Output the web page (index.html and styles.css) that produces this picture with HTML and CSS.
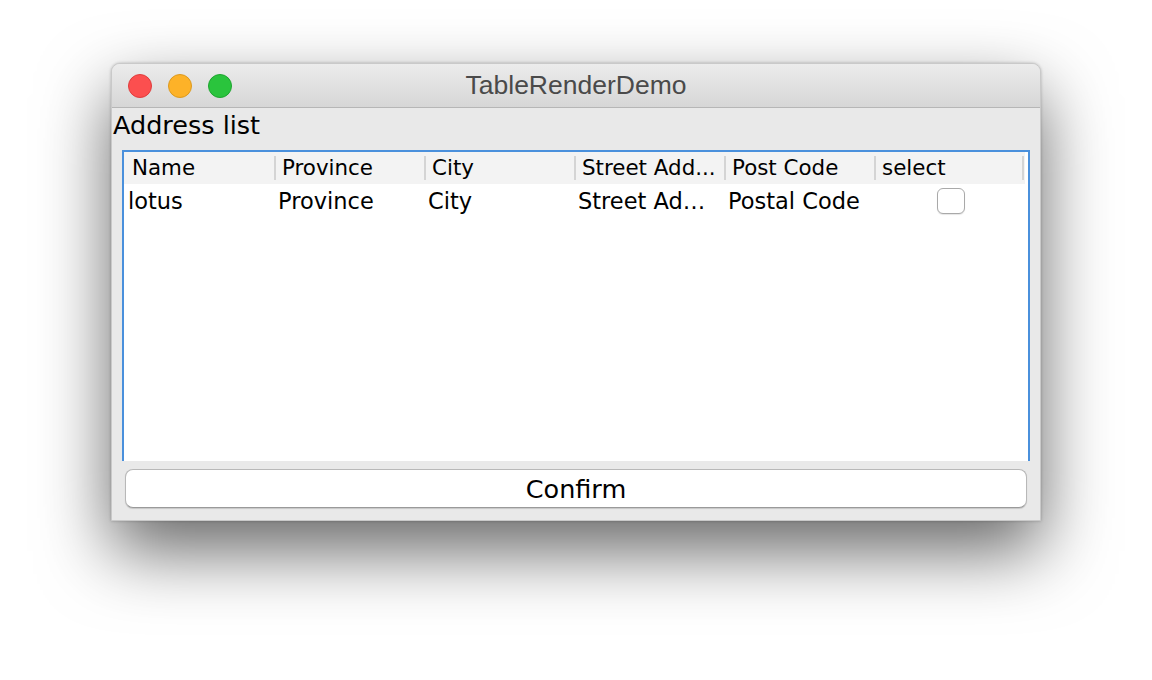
FILE: index.html
```html
<!DOCTYPE html>
<html>
<head>
<meta charset="utf-8">
<link rel="stylesheet" href="styles.css">
</head>
<body>
<div class="window">
  <div class="titlebar">
    <div class="lights">
      <span class="light red"></span>
      <span class="light yellow"></span>
      <span class="light green"></span>
    </div>
    <div class="title">TableRenderDemo</div>
  </div>
  <div class="content">
    <div class="label">Address list</div>
    <div class="pane">
      <div class="table">
        <div class="thead">
          <div class="th">Name</div>
          <div class="th">Province</div>
          <div class="th">City</div>
          <div class="th">Street Add...</div>
          <div class="th">Post Code</div>
          <div class="th">select</div>
        </div>
        <div class="tr">
          <div class="td">lotus</div>
          <div class="td">Province</div>
          <div class="td">City</div>
          <div class="td">Street Ad…</div>
          <div class="td">Postal Code</div>
          <div class="td check"><span class="checkbox"></span></div>
        </div>
      </div>
    </div>
    <div class="actions">
      <button class="button">Confirm</button>
    </div>
  </div>
</div>
</body>
</html>
```
FILE: styles.css
```css
html, body {
  margin: 0;
  padding: 0;
  background: #ffffff;
  width: 1152px;
  height: 680px;
  overflow: hidden;
}
.window {
  margin: 63px 0 0 111px;
  width: 930px;
  height: 458px;
  box-sizing: border-box;
  border: 1px solid #c9c9c9;
  border-radius: 9px 9px 0 0;
  background: #e9e9e9;
  box-shadow: 0 30px 70px rgba(0,0,0,0.6), 0 0 3px rgba(0,0,0,0.25);
  overflow: hidden;
  display: flex;
  flex-direction: column;
  font-family: "DejaVu Sans", sans-serif;
}
.titlebar {
  height: 44px;
  flex: none;
  box-sizing: border-box;
  border-bottom: 1px solid #b6b6b6;
  background: linear-gradient(#ececec, #d6d6d6);
  display: flex;
  align-items: center;
  position: relative;
}
.lights {
  display: flex;
  gap: 16px;
  padding-left: 16px;
}
.light {
  width: 24px;
  height: 24px;
  border-radius: 50%;
  box-sizing: border-box;
}
.red { background: #fc4f4f; border: 1px solid #df3d3d; }
.yellow { background: #fdb228; border: 1px solid #dc9a1f; }
.green { background: #2ac43d; border: 1px solid #1ea530; }
.title {
  position: absolute;
  left: 0;
  right: 0;
  top: 0;
  bottom: 0;
  display: flex;
  align-items: center;
  justify-content: center;
  font-family: "Liberation Sans", sans-serif;
  font-size: 26.5px;
  color: #4a4a4a;
  pointer-events: none;
}
.content {
  flex: 1;
  display: flex;
  flex-direction: column;
  padding: 0 10px 12px 10px;
  min-height: 0;
}
.label {
  font-size: 25.5px;
  color: #000;
  height: 42px;
  line-height: 35px;
  margin-left: -9px;
}
.pane {
  flex: 1;
  min-height: 0;
  border: 2px solid #4a90dc;
  border-bottom: none;
  background: #ffffff;
  overflow: hidden;
}
.thead {
  display: flex;
  height: 32px;
  background: #f3f3f3;
  width: 901px;
}
.th {
  width: 150px;
  box-sizing: border-box;
  font-size: 21.4px;
  height: 24px;
  line-height: 24px;
  margin-top: 4px;
  padding-left: 8px;
  color: #000;
}
.th + .th {
  border-left: 2px solid #d4d4d4;
  padding-left: 6px;
}
.th:last-child {
  border-right: 2px solid #d4d4d4;
}
.tr {
  display: flex;
  height: 34px;
  align-items: center;
}
.td {
  width: 150px;
  box-sizing: border-box;
  padding-left: 4px;
  font-size: 22.5px;
  color: #000;
  white-space: nowrap;
}
.check {
  display: flex;
  justify-content: center;
}
.checkbox {
  width: 28px;
  height: 26px;
  box-sizing: border-box;
  border: 1px solid #a9a9a9;
  border-radius: 6px;
  background: #fff;
  box-shadow: 0 1px 1px rgba(0,0,0,0.1);
}
.actions {
  flex: none;
  padding-top: 8px;
}
.button {
  display: block;
  width: 902px;
  height: 39px;
  margin-left: 3px;
  border: 1px solid #b8b8b8;
  border-bottom-color: #9a9a9a;
  border-radius: 8px;
  background: #ffffff;
  box-shadow: 0 1px 1px rgba(0,0,0,0.15);
  font-family: "DejaVu Sans", sans-serif;
  font-size: 25.5px;
  color: #000;
  padding: 0;
}
```
